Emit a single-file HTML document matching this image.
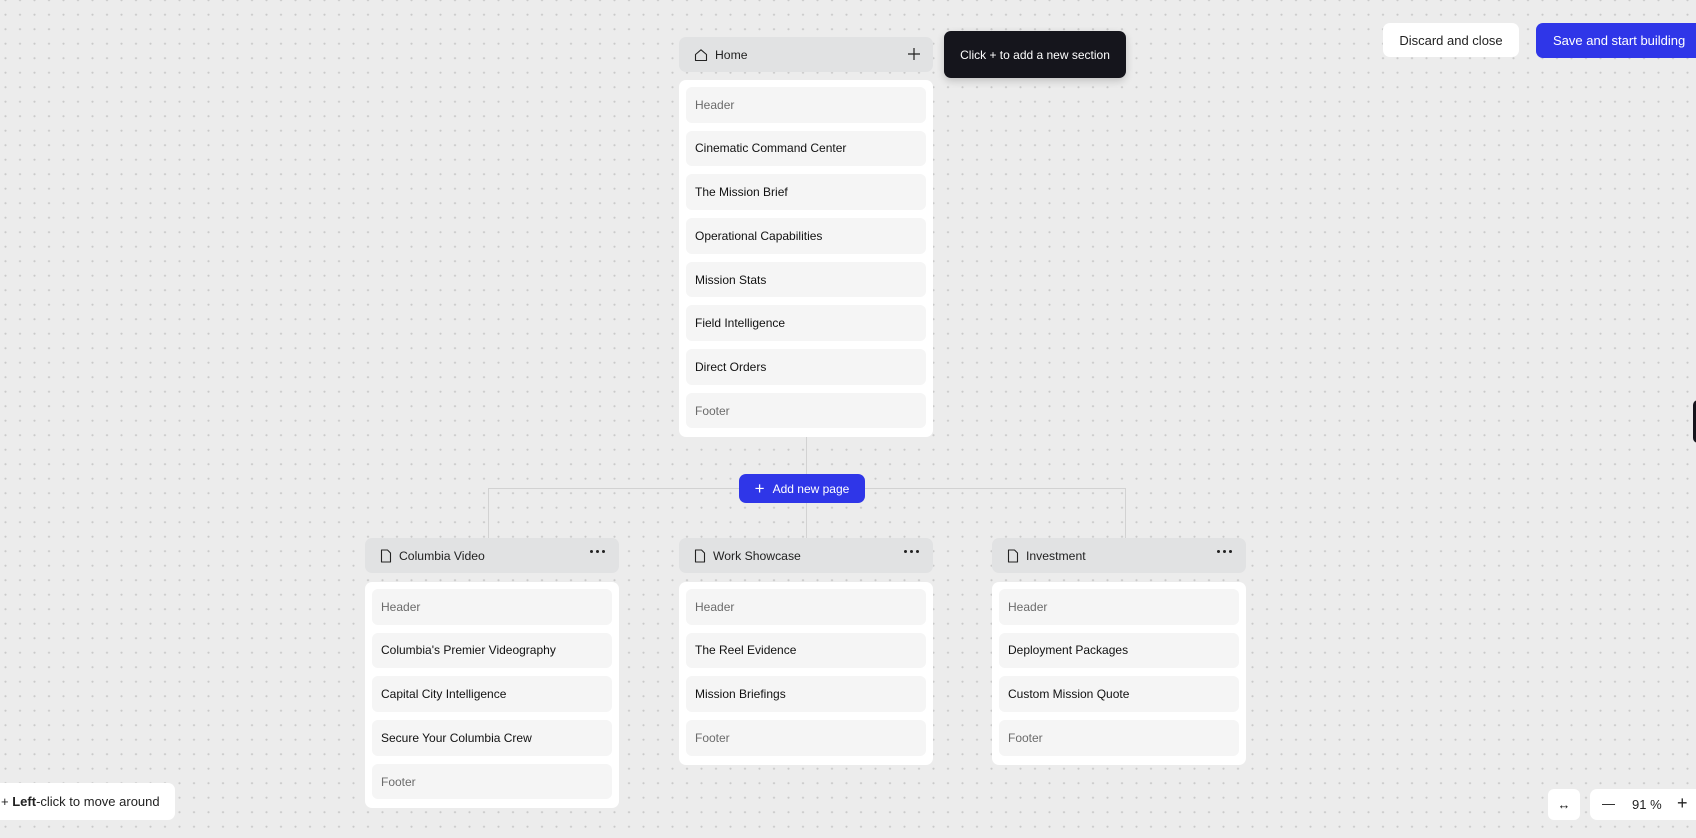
<!DOCTYPE html>
<html><head><meta charset="utf-8"><style>
*{box-sizing:border-box;margin:0;padding:0}
html,body{width:1696px;height:838px;overflow:hidden}
body{position:relative;font-family:"Liberation Sans",sans-serif;background-color:#ececec;
background-image:radial-gradient(circle,#c9c9c9 0.9px,transparent 1.2px);background-size:14.5px 14.5px;background-position:-1.75px -7.05px;color:#151515}
.abs{position:absolute}
.btn{position:absolute;border-radius:7px;font-size:13px;display:flex;align-items:center;justify-content:center}
.ph{position:absolute;width:254px;height:35px;background:#e1e2e3;border-radius:7px;display:flex;align-items:center;font-size:12.2px;color:#222}
.ph svg{margin-left:15px;margin-right:7px}
.dots{position:absolute;right:14px;top:12px;display:flex;gap:3px}
.dots i{width:3px;height:3px;border-radius:50%;background:#222;display:block}
.card{position:absolute;width:254px;background:#fff;border-radius:7px;padding:7px 7px 0 7px}
.it{height:35.5px;background:#f5f5f5;border-radius:6px;margin-bottom:8.2px;display:flex;align-items:center;padding-left:9px;font-size:12px;color:#111}
.it.g{color:#6b6b6b}
.ln{position:absolute;background:#d2d2d2}
</style></head><body>
<div class="ln" style="left:806px;top:437px;width:1px;height:101px"></div>
<div class="ln" style="left:488px;top:488px;width:638px;height:1px"></div>
<div class="ln" style="left:488px;top:488px;width:1px;height:50px"></div>
<div class="ln" style="left:1125px;top:488px;width:1px;height:50px"></div>

<div class="btn" style="left:1383px;top:23px;width:136px;height:34px;background:#fff;color:#222">Discard and close</div>
<div class="btn" style="left:1536px;top:23px;width:176px;height:35px;background:#2f36e8;color:#fff;justify-content:flex-start;padding-left:17px">Save and start building</div>

<div class="ph" style="left:679px;top:37px">
<svg width="14" height="14" viewBox="0 0 14 14" fill="none" stroke="#222" stroke-width="1.1"><path d="M1.5 6.5L7 1.8l5.5 4.7V12.5h-11z" stroke-linejoin="round"/></svg>Home
<svg class="abs" style="right:12px;top:10px;margin:0" width="14" height="14" viewBox="0 0 14 14" stroke="#222" stroke-width="1.2"><path d="M7 1v12M1 7h12"/></svg>
</div>
<div class="abs" style="left:944px;top:31px;width:182px;height:47px;background:#15151c;border-radius:7px;color:#fff;font-size:12px;display:flex;align-items:center;justify-content:center;box-shadow:0 3px 8px rgba(0,0,0,.18)">Click + to add a new section</div>
<div class="card" style="left:679px;top:80px;height:357px">
<div class="it g">Header</div><div class="it">Cinematic Command Center</div><div class="it">The Mission Brief</div><div class="it">Operational Capabilities</div><div class="it">Mission Stats</div><div class="it">Field Intelligence</div><div class="it">Direct Orders</div><div class="it g">Footer</div>
</div>

<div class="btn" style="left:739px;top:474px;width:126px;height:29px;background:#2f36e8;color:#fff;font-size:12px"><span style="font-size:17px;margin-right:8px;font-weight:300">+</span>Add new page</div>

<div class="ph" style="left:365px;top:538px"><svg width="12" height="14" viewBox="0 0 12 14" fill="none" stroke="#222" stroke-width="1.1"><path d="M1.5 1h6l3 3v9h-9z" stroke-linejoin="round"/></svg>Columbia Video<span class="dots"><i></i><i></i><i></i></span></div>
<div class="card" style="left:365px;top:582px;height:226px">
<div class="it g">Header</div><div class="it">Columbia's Premier Videography</div><div class="it">Capital City Intelligence</div><div class="it">Secure Your Columbia Crew</div><div class="it g">Footer</div></div>

<div class="ph" style="left:679px;top:538px"><svg width="12" height="14" viewBox="0 0 12 14" fill="none" stroke="#222" stroke-width="1.1"><path d="M1.5 1h6l3 3v9h-9z" stroke-linejoin="round"/></svg>Work Showcase<span class="dots"><i></i><i></i><i></i></span></div>
<div class="card" style="left:679px;top:582px;height:183px">
<div class="it g">Header</div><div class="it">The Reel Evidence</div><div class="it">Mission Briefings</div><div class="it g">Footer</div></div>

<div class="ph" style="left:992px;top:538px"><svg width="12" height="14" viewBox="0 0 12 14" fill="none" stroke="#222" stroke-width="1.1"><path d="M1.5 1h6l3 3v9h-9z" stroke-linejoin="round"/></svg>Investment<span class="dots"><i></i><i></i><i></i></span></div>
<div class="card" style="left:992px;top:582px;height:183px">
<div class="it g">Header</div><div class="it">Deployment Packages</div><div class="it">Custom Mission Quote</div><div class="it g">Footer</div></div>

<div class="abs" style="left:-10px;top:783px;width:185px;height:37px;background:#fff;border-radius:7px;font-size:13px;display:flex;align-items:center;padding-left:11px;color:#222">+&nbsp;<b>Left</b>-click to move around</div>

<div class="abs" style="left:1548px;top:789px;width:32px;height:31px;background:#fff;border-radius:6px;display:flex;align-items:center;justify-content:center;font-size:13px">&#8596;</div>
<div class="abs" style="left:1590px;top:789px;width:120px;height:31px;background:#fff;border-radius:7px;font-size:13px;color:#222">
<span class="abs" style="left:12px;top:15px;width:13px;height:1.2px;background:#333"></span>
<span class="abs" style="left:42px;top:8px">91 %</span>
<span class="abs" style="left:87px;top:4px;font-size:18px">+</span></div>

<div class="abs" style="left:1693px;top:400px;width:10px;height:43px;background:#15151c;border-radius:5px"></div>
</body></html>
